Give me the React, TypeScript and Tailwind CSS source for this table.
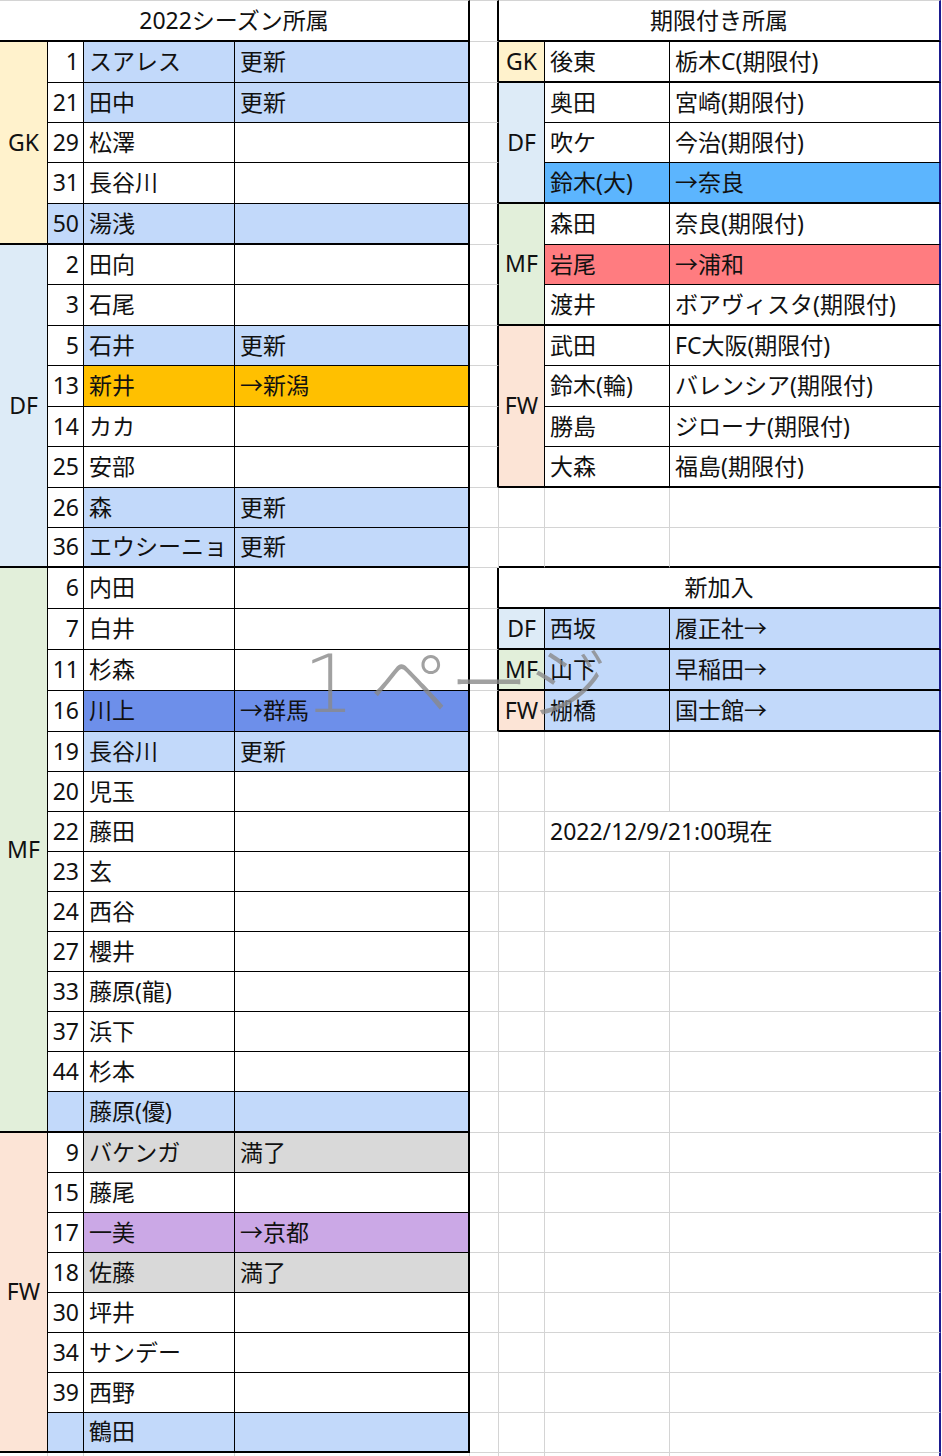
import React from 'react';

type BR = 'n' | 'g' | 't' | 'T' | 'v';
type BB = 'n' | 'g' | 't' | 'T';

const RC: Record<BR, string> = {
  n: '',
  g: 'border-r border-r-[#d4d4d4]',
  t: 'border-r border-r-black',
  T: 'border-r-2 border-r-black',
  v: 'border-r-2 border-r-[#1b1b8f]',
};
const BC: Record<BB, string> = {
  n: '',
  g: 'border-b border-b-[#d4d4d4]',
  t: 'border-b border-b-black',
  T: 'border-b-2 border-b-black',
};
const SPAN: Record<number, string> = {
  1: '',
  3: 'row-span-3',
  4: 'row-span-4',
  5: 'row-span-5',
  8: 'row-span-8',
  14: 'row-span-14',
};
const ALIGN = {
  l: 'justify-start pl-[5px]',
  r: 'justify-end pr-[4px]',
  c: 'justify-center',
};

interface Cell {
  text?: string;
  r: BR;
  b: BB;
  bg?: string;
  align?: 'l' | 'r' | 'c';
  rs?: number;
  cs?: 3 | 4;
  top?: boolean;
  overflow?: boolean;
}

const YEL = 'bg-[#fff2cc]';
const DFB = 'bg-[#ddebf7]';
const MFB = 'bg-[#e2efda]';
const FWB = 'bg-[#fce4d6]';
const BLUE = 'bg-[#c2d9fa]';
const ORANGE = 'bg-[#ffc000]';
const ROYAL = 'bg-[#6d8fea]';
const PURPLE = 'bg-[#cba8e6]';
const GRAY = 'bg-[#d9d9d9]';
const SKY = 'bg-[#5cb5fe]';
const RED = 'bg-[#ff7c80]';

type LRow = [string, string, string?, string?, boolean?];

const groups: { pos: string; bg: string; rows: LRow[] }[] = [
  {
    pos: 'GK',
    bg: YEL,
    rows: [
      ['1', 'スアレス', '更新', BLUE],
      ['21', '田中', '更新', BLUE],
      ['29', '松澤'],
      ['31', '長谷川'],
      ['50', '湯浅', '', BLUE, true],
    ],
  },
  {
    pos: 'DF',
    bg: DFB,
    rows: [
      ['2', '田向'],
      ['3', '石尾'],
      ['5', '石井', '更新', BLUE],
      ['13', '新井', '→新潟', ORANGE],
      ['14', 'カカ'],
      ['25', '安部'],
      ['26', '森', '更新', BLUE],
      ['36', 'エウシーニョ', '更新', BLUE],
    ],
  },
  {
    pos: 'MF',
    bg: MFB,
    rows: [
      ['6', '内田'],
      ['7', '白井'],
      ['11', '杉森'],
      ['16', '川上', '→群馬', ROYAL],
      ['19', '長谷川', '更新', BLUE],
      ['20', '児玉'],
      ['22', '藤田'],
      ['23', '玄'],
      ['24', '西谷'],
      ['27', '櫻井'],
      ['33', '藤原(龍)'],
      ['37', '浜下'],
      ['44', '杉本'],
      ['', '藤原(優)', '', BLUE, true],
    ],
  },
  {
    pos: 'FW',
    bg: FWB,
    rows: [
      ['9', 'バケンガ', '満了', GRAY],
      ['15', '藤尾'],
      ['17', '一美', '→京都', PURPLE],
      ['18', '佐藤', '満了', GRAY],
      ['30', '坪井'],
      ['34', 'サンデー'],
      ['39', '西野'],
      ['', '鶴田', '', BLUE, true],
    ],
  },
];

interface RRow {
  pos?: { text: string; bg: string; rs: number };
  name: string;
  st: string;
  b: BB;
  bg?: string;
}

const right: Record<number, RRow> = {
  1: { pos: { text: 'GK', bg: YEL, rs: 1 }, name: '後東', st: '栃木C(期限付)', b: 'T' },
  2: { pos: { text: 'DF', bg: DFB, rs: 3 }, name: '奥田', st: '宮崎(期限付)', b: 't' },
  3: { name: '吹ケ', st: '今治(期限付)', b: 't' },
  4: { name: '鈴木(大)', st: '→奈良', b: 'T', bg: SKY },
  5: { pos: { text: 'MF', bg: MFB, rs: 3 }, name: '森田', st: '奈良(期限付)', b: 't' },
  6: { name: '岩尾', st: '→浦和', b: 't', bg: RED },
  7: { name: '渡井', st: 'ボアヴィスタ(期限付)', b: 'T' },
  8: { pos: { text: 'FW', bg: FWB, rs: 4 }, name: '武田', st: 'FC大阪(期限付)', b: 't' },
  9: { name: '鈴木(輪)', st: 'バレンシア(期限付)', b: 't' },
  10: { name: '勝島', st: 'ジローナ(期限付)', b: 't' },
  11: { name: '大森', st: '福島(期限付)', b: 'T' },
  15: { pos: { text: 'DF', bg: DFB, rs: 1 }, name: '西坂', st: '履正社→', b: 'T', bg: BLUE },
  16: { pos: { text: 'MF', bg: MFB, rs: 1 }, name: '山下', st: '早稲田→', b: 'T', bg: BLUE },
  17: { pos: { text: 'FW', bg: FWB, rs: 1 }, name: '棚橋', st: '国士館→', b: 'T', bg: BLUE },
};

function buildCells(): Cell[] {
  const cells: Cell[] = [];
  cells.push({ text: '2022シーズン所属', r: 'T', b: 'T', cs: 4, align: 'c', top: true });
  cells.push({ r: 'T', b: 'g', top: true });
  cells.push({ text: '期限付き所属', r: 'v', b: 'T', cs: 3, align: 'c', top: true });
  cells.push({ r: 'n', b: 'n' });

  const leftRows: { first?: { pos: string; bg: string; rs: number }; row: LRow; last: boolean }[] = [];
  groups.forEach((g) => {
    g.rows.forEach((row, i) => {
      leftRows.push({
        first: i === 0 ? { pos: g.pos, bg: g.bg, rs: g.rows.length } : undefined,
        row,
        last: i === g.rows.length - 1,
      });
    });
  });

  for (let i = 1; i <= 35; i++) {
    const lr = leftRows[i - 1];
    if (lr.first) {
      cells.push({ text: lr.first.pos, r: 't', b: 'T', bg: lr.first.bg, align: 'c', rs: lr.first.rs });
    }
    const [num, name, st, color, numColored] = lr.row;
    const bb: BB = lr.last ? 'T' : 't';
    cells.push({ text: num, r: 't', b: bb, align: 'r', bg: numColored ? color : undefined });
    cells.push({ text: name, r: 't', b: bb, align: 'l', bg: color });
    cells.push({ text: st || '', r: 'T', b: bb, align: 'l', bg: color });

    const inTable = i <= 11 || (i >= 14 && i <= 17);
    cells.push({ r: inTable ? 'T' : 'g', b: 'g' });

    if (i === 14) {
      cells.push({ text: '新加入', r: 'v', b: 'T', cs: 3, align: 'c' });
    } else if (right[i]) {
      const rr = right[i];
      if (rr.pos) {
        cells.push({ text: rr.pos.text, r: 't', b: 'T', bg: rr.pos.bg, align: 'c', rs: rr.pos.rs });
      }
      cells.push({ text: rr.name, r: 't', b: rr.b, bg: rr.bg, align: 'l' });
      cells.push({ text: rr.st, r: 'v', b: rr.b, bg: rr.bg, align: 'l' });
    } else if (i === 13) {
      cells.push({ r: 'g', b: 'T' });
      cells.push({ r: 'g', b: 'T' });
      cells.push({ r: 'v', b: 'T' });
    } else if (i === 20) {
      cells.push({ r: 'g', b: 'g' });
      cells.push({ text: '2022/12/9/21:00現在', r: 'n', b: 'g', align: 'l', overflow: true });
      cells.push({ r: 'v', b: 'g' });
    } else {
      cells.push({ r: 'g', b: 'g' });
      cells.push({ r: 'g', b: 'g' });
      cells.push({ r: 'v', b: 'g' });
    }
    cells.push({ r: 'n', b: 'n' });
  }

  (['g', 'g', 'g', 'g', 'g', 'g', 'g', 'v', 'n'] as BR[]).forEach((r) => cells.push({ r, b: 'n' }));
  return cells;
}

const CELLS = buildCells();

export default function App() {
  return (
    <div className="relative w-[942px] h-[1456px] overflow-hidden bg-white text-[#111] font-['Noto_Sans','Noto_Sans_CJK_JP',sans-serif] text-[23px] leading-none">
      <div className="grid grid-cols-[48px_36px_151px_235px_29px_46px_125px_271px_1px] grid-rows-[42px_41px_40px_40px_41px_41px_40px_41px_40px_41px_40px_41px_40px_40px_41px_41px_41px_41px_40px_40px_40px_40px_40px_40px_40px_40px_40px_41px_40px_40px_40px_40px_40px_40px_40px_40px_3px]">
        {CELLS.map((c, idx) => (
          <div
            key={idx}
            className={[
              'flex items-center whitespace-nowrap pb-[1px]',
              c.overflow ? 'overflow-visible relative z-10' : 'overflow-hidden',
              RC[c.r],
              BC[c.b],
              c.bg || '',
              c.align ? ALIGN[c.align] : '',
              SPAN[c.rs || 1],
              c.cs === 3 ? 'col-span-3' : c.cs === 4 ? 'col-span-4' : '',
              c.top ? 'border-t border-t-[#d4d4d4]' : '',
            ].join(' ')}
          >
            {c.text}
          </div>
        ))}
      </div>
      <div className="pointer-events-none absolute left-[289px] top-[637px] z-20 flex items-baseline text-[80px] leading-none text-[#8a8a8a] opacity-80">
        <span className="w-[80px] text-center font-['DejaVu_Sans'] font-light">1</span>
        <span className="font-['Noto_Sans_CJK_JP'] font-light">ページ</span>
      </div>
    </div>
  );
}
